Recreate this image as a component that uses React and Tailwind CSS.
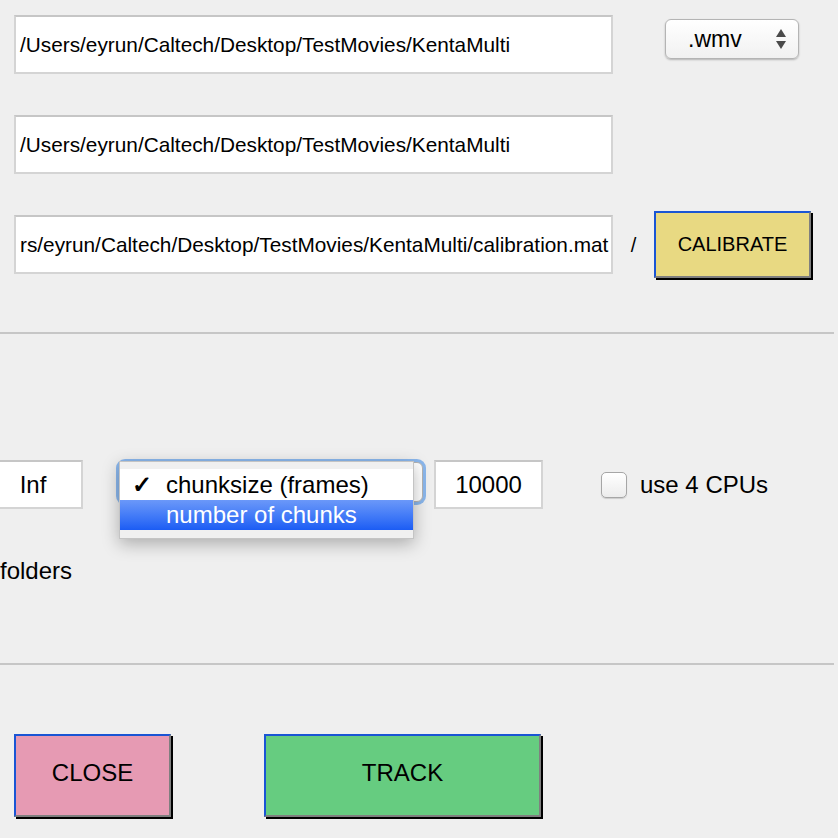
import React from 'react';

const FONT = { fontFamily: '"Liberation Sans", Arial, Helvetica, sans-serif' };

function TextField({ children, className = '', align = 'left' }) {
  return (
    <div
      className={`flex items-center shrink-0 overflow-hidden whitespace-nowrap bg-white border-2 border-[#d4d4d4] border-t-[#c6c6c6] text-black ${
        align === 'center' ? 'justify-center' : 'pl-[4px]'
      } ${className}`}
    >
      {children}
    </div>
  );
}

function MatButton({ label, className = '', text = 'text-[24px] pb-[5px]' }) {
  return (
    <div
      className={`flex items-center justify-center shrink-0 border-2 border-t-[#1a55d4] border-l-[#1a55d4] border-r-[#7f7f7f] border-b-[#7f7f7f] shadow-[2px_2px_0_#000] text-black ${text} ${className}`}
    >
      {label}
    </div>
  );
}

function UpDownArrows() {
  return (
    <svg width="12" height="22" viewBox="0 0 12 22" className="shrink-0">
      <polygon points="6,1 11,9 1,9" fill="#4a4a4a" />
      <polygon points="1,13 11,13 6,21" fill="#4a4a4a" />
    </svg>
  );
}

export default function App() {
  return (
    <div className="relative w-[838px] h-[838px] overflow-hidden bg-[#efefef]" style={FONT}>
      {/* movie folder + extension */}
      <div className="flex items-start pt-[15px] pl-[14px]">
        <TextField className="w-[599px] h-[59px] text-[20.8px]">
          /Users/eyrun/Caltech/Desktop/TestMovies/KentaMulti
        </TextField>
        <div className="ml-[52px] mt-[4px] w-[134px] h-[40px] flex items-center justify-between pl-[22px] pr-[11px] rounded-[6px] border border-[#b4b4b4] bg-gradient-to-b from-white to-[#f1f1f1] shadow-[0_1px_2px_rgba(0,0,0,0.25)] text-[23px] text-black">
          <span>.wmv</span>
          <UpDownArrows />
        </div>
      </div>

      {/* output folder */}
      <div className="flex pl-[14px] mt-[41px]">
        <TextField className="w-[599px] h-[59px] text-[20.8px]">
          /Users/eyrun/Caltech/Desktop/TestMovies/KentaMulti
        </TextField>
      </div>

      {/* calibration file */}
      <div className="flex items-start pl-[14px] mt-[37px]">
        <TextField className="w-[599px] h-[59px] mt-[4px] text-[20.8px]">
          rs/eyrun/Caltech/Desktop/TestMovies/KentaMulti/calibration.mat
        </TextField>
        <div className="w-[41px] h-[59px] mt-[4px] flex items-center justify-center text-[20px] text-black">/</div>
        <MatButton label="CALIBRATE" text="text-[20px] pb-[2px]" className="w-[157px] h-[67px] bg-[#e8d982]" />
      </div>

      <div className="mt-[54px] h-[2px] w-[834px] bg-[#c6c6c6]" />

      {/* options row */}
      <div className="flex items-start mt-[126px] text-[24px] text-black">
        <TextField align="center" className="ml-[-17px] w-[100px] h-[49px]">
          Inf
        </TextField>
        <div className="relative ml-[36px] mt-[2px] w-[304px] h-[40px] rounded-[6px] border border-[#b4b4b4] bg-white shadow-[0_0_0_3px_#8bb7ec]">
          <div className="absolute left-[-1px] top-[-2px] w-[295px] h-[78px] flex flex-col bg-[#f0f0f0] border border-[#c4c4c4] shadow-[0_5px_16px_rgba(0,0,0,0.28)] pt-[7px]">
            <div className="h-[31px] bg-white flex items-center">
              <span className="w-[46px] pl-[12px] text-[24px] font-bold leading-none">✓</span>
              <span className="leading-none">chunksize (frames)</span>
            </div>
            <div className="h-[30px] flex items-center pl-[46px] text-white bg-gradient-to-b from-[#6b98f9] to-[#1b5cf4] leading-none">
              number of chunks
            </div>
          </div>
        </div>
        <TextField align="center" className="ml-[11px] w-[109px] h-[49px]">
          10000
        </TextField>
        <div className="ml-[58px] mt-[12px] w-[26px] h-[26px] rounded-[5px] border border-[#a6a6a6] bg-gradient-to-b from-white to-[#ececec] shadow-[0_1px_1px_rgba(0,0,0,0.15)]" />
        <div className="ml-[13px] h-[49px] flex items-center whitespace-nowrap">use 4 CPUs</div>
      </div>

      <div className="mt-[48px] leading-[28px] text-[24px] text-black">folders</div>

      <div className="mt-[78px] h-[2px] w-[834px] bg-[#c6c6c6]" />

      {/* action buttons */}
      <div className="flex items-start mt-[69px] pl-[14px]">
        <MatButton label="CLOSE" className="w-[157px] h-[83px] bg-[#e69ab3]" />
        <MatButton label="TRACK" className="ml-[93px] w-[277px] h-[83px] bg-[#66cc80]" />
      </div>
    </div>
  );
}
